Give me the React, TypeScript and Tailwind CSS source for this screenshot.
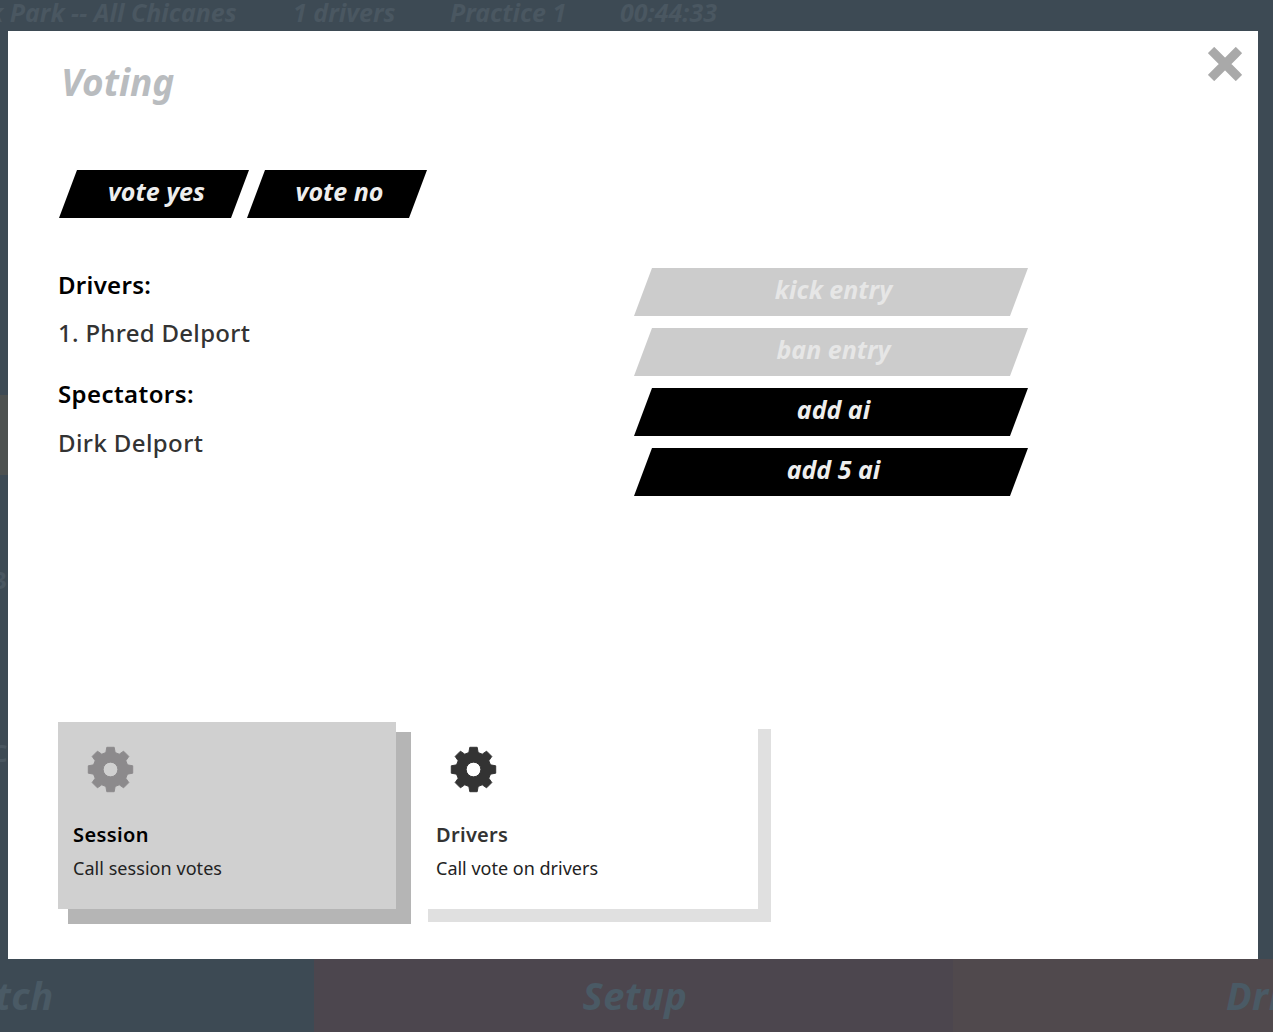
const font = "font-['Noto_Sans',sans-serif]";

function gearPath(cx: number, cy: number) {
  const outer = 23;
  const root = 18;
  const pts: string[] = [];
  for (let i = 0; i < 8; i++) {
    const a = (i * Math.PI) / 4 - Math.PI / 2;
    const step = Math.PI / 8;
    const list: [number, number][] = [
      [root, a - step * 0.68],
      [outer, a - step * 0.42],
      [outer, a + step * 0.42],
      [root, a + step * 0.68],
    ];
    list.forEach(([r, t]) => pts.push(`${(cx + r * Math.cos(t)).toFixed(2)} ${(cy + r * Math.sin(t)).toFixed(2)}`));
  }
  const hole = 7.5;
  return `M${pts.join("L")}Z M${cx + hole} ${cy}a${hole} ${hole} 0 1 0 ${-2 * hole} 0a${hole} ${hole} 0 1 0 ${2 * hole} 0Z`;
}

function Gear({ className }: { className: string }) {
  return (
    <svg viewBox="0 0 48 48" className={className} fill="currentColor" fillRule="evenodd">
      <path d={gearPath(24, 24)} strokeLinejoin="round" stroke="currentColor" strokeWidth="1" />
    </svg>
  );
}

function SlantButton({ label, className }: { label: string; className: string }) {
  return (
    <button
      className={`h-12 flex items-center justify-center pl-[5px] pb-[4px] text-[25px] font-bold italic [clip-path:polygon(18px_0,100%_0,calc(100%-18px)_100%,0_100%)] ${className}`}
    >
      {label}
    </button>
  );
}

export default function App() {
  return (
    <div className={`relative h-[1032px] w-[1273px] overflow-hidden bg-[#3d4a54] ${font}`}>
      {/* page behind the modal */}
      <div className="h-[24px] flex items-center -ml-[44px] text-[25px] leading-[24px] font-bold italic text-[#4a5761] whitespace-nowrap">
        <span className="w-[337px]">Oak Park -- All Chicanes</span>
        <span className="w-[157px]">1 drivers</span>
        <span className="w-[170px]">Practice 1</span>
        <span>00:44:33</span>
      </div>
      <div className="absolute left-0 top-[395px] w-[8px] h-[80px] bg-[#4d5150]" />
      <div className="absolute -left-[7px] top-[562px] text-[24px] font-bold text-[#4a5761]">3</div>
      <div className="absolute -left-[8px] top-[735px] text-[24px] font-bold text-[#4a5761]">C</div>
      <div className="absolute left-0 bottom-0 h-[73px] flex -ml-[325px] text-[38px] font-bold italic tracking-[0.5px] text-[#4a5a65]">
        <div className="w-[639px] pl-[3px] flex items-center justify-center bg-[#3d4a54]">Match</div>
        <div className="w-[639px] pl-[3px] flex items-center justify-center bg-[#4c464e]">Setup</div>
        <div className="w-[639px] pl-[3px] flex items-center justify-center bg-[#50494d]">Drive</div>
      </div>

      {/* modal */}
      <div className="absolute left-[8px] top-[31px] w-[1250px] h-[928px] bg-white px-[50px] pt-[31px] pb-[50px] flex flex-col">
        <svg viewBox="0 0 34 34" className="absolute left-[1200px] top-[16px] w-[34px] h-[34px] text-[#a9a9a9]">
          <path d="M5 5L29 29M29 5L5 29" stroke="currentColor" strokeWidth="10" strokeLinecap="square" transform="translate(17 17) scale(0.9) translate(-17 -17)" />
        </svg>

        <h1 className="ml-[3px] h-[40px] leading-[40px] text-[37px] font-bold italic text-[#b9bcbf]">Voting</h1>

        <div className="mt-[68px] flex">
          <SlantButton label="vote yes" className="w-[190px] ml-[1px] bg-black text-[#eeeeee]" />
          <SlantButton label="vote no" className="w-[180px] -ml-[2px] bg-black text-[#eeeeee]" />
        </div>

        <div className="mt-[50px] flex flex-1">
          <div className="w-[576px] pt-[1px]">
            <div className="h-[32px] leading-[32px] text-[24px] font-semibold text-black tracking-[0.3px]">Drivers:</div>
            <div className="mt-[16px] h-[32px] leading-[32px] text-[24px] font-medium text-[#333333] tracking-[0.3px]">1. Phred Delport</div>
            <div className="mt-[29px] h-[32px] leading-[32px] text-[24px] font-semibold text-black tracking-[0.4px]">Spectators:</div>
            <div className="mt-[17px] h-[32px] leading-[32px] text-[24px] font-medium text-[#333333] tracking-[0.4px]">Dirk Delport</div>
          </div>
          <div className="w-[394px] flex flex-col gap-3">
            <SlantButton label="kick entry" className="w-full bg-[#cccccc] text-[#e6e6e6]" />
            <SlantButton label="ban entry" className="w-full bg-[#cccccc] text-[#e6e6e6]" />
            <SlantButton label="add ai" className="w-full bg-black text-[#eeeeee]" />
            <SlantButton label="add 5 ai" className="w-full bg-black text-[#eeeeee]" />
          </div>
        </div>

        <div className="flex h-[187px] gap-[25px]">
          <div className="w-[338px] bg-[#d0d0d0] pl-[15px] pt-[24px] shadow-[12.5px_12.5px_0_2.5px_#b5b5b5]">
            <Gear className="ml-[14px] w-[47px] h-[47px] text-[#8c8a8c]" />
            <div className="mt-[28px] h-[28px] leading-[28px] text-[20px] font-semibold text-black tracking-[0.4px]">Session</div>
            <div className="mt-[5px] h-[28px] leading-[28px] text-[18px] text-[#222222] tracking-[0.05px]">Call session votes</div>
          </div>
          <div className="w-[337px] bg-white pl-[15px] pt-[24px] shadow-[10px_10px_0_3px_#e0e0e0]">
            <Gear className="ml-[14px] w-[47px] h-[47px] text-[#333333]" />
            <div className="mt-[28px] h-[28px] leading-[28px] text-[20px] font-semibold text-[#333333] tracking-[0.3px]">Drivers</div>
            <div className="mt-[5px] h-[28px] leading-[28px] text-[18px] text-[#222222]">Call vote on drivers</div>
          </div>
        </div>
      </div>
    </div>
  );
}
